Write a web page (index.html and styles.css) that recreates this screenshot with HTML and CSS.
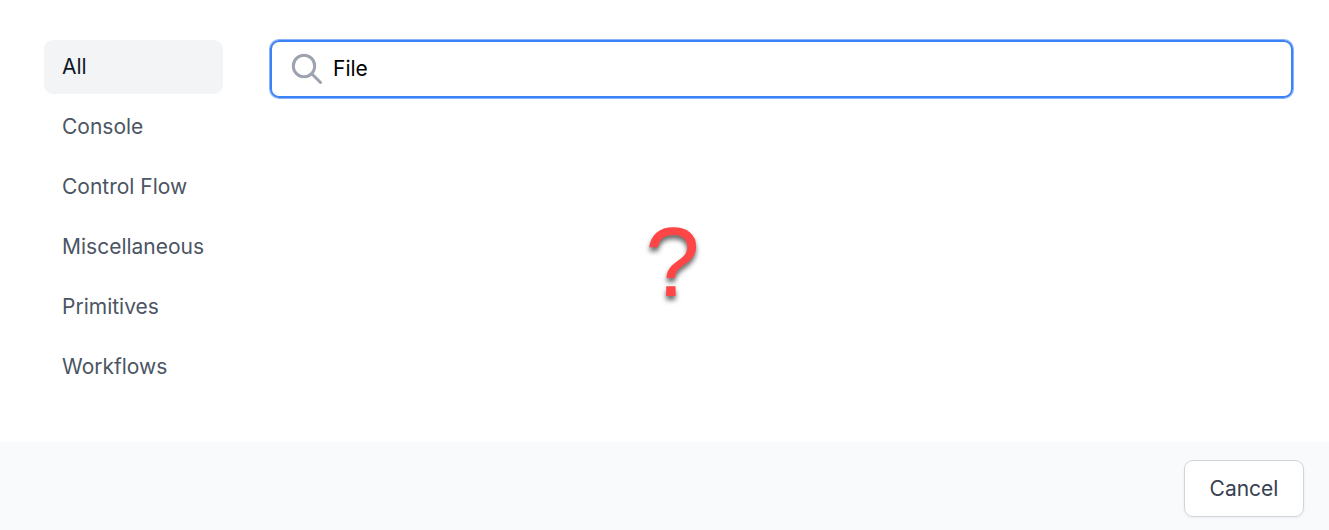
FILE: index.html
```html
<!DOCTYPE html>
<html lang="en">
<head>
<meta charset="utf-8">
<meta name="viewport" content="width=device-width, initial-scale=1">
<title>Add activity</title>
<link rel="stylesheet" href="styles.css">
</head>
<body>
<div class="dialog">
  <main class="content">
    <nav class="categories">
      <a class="category active" href="#all" aria-current="page">All</a>
      <a class="category" href="#console">Console</a>
      <a class="category" href="#control-flow">Control Flow</a>
      <a class="category" href="#miscellaneous">Miscellaneous</a>
      <a class="category" href="#primitives">Primitives</a>
      <a class="category" href="#workflows">Workflows</a>
    </nav>
    <section class="results">
      <label class="search">
        <svg class="search-icon" viewBox="0 0 32 32" fill="none" stroke="currentColor" stroke-width="3" stroke-linecap="round" aria-hidden="true">
          <circle cx="13" cy="13" r="10.7"/>
          <path d="M21 21l8.500 8.500"/>
        </svg>
        <input class="search-input" type="text" value="File" aria-label="Search">
      </label>
      <div class="empty"><span class="question">?</span></div>
    </section>
  </main>
  <footer class="footer">
    <button class="cancel" type="button">Cancel</button>
  </footer>
</div>
</body>
</html>
```
FILE: styles.css
```css
* {
  box-sizing: border-box;
}

body {
  margin: 0;
  background: #fff;
  color: #000;
  font-family: Inter, sans-serif;
  font-size: 21px;
  line-height: 30px;
}

.dialog {
  display: flex;
  flex-direction: column;
  min-height: 100vh;
}

.content {
  display: flex;
  flex: 1;
  gap: 47px;
  padding: 40px 36px 45px 44px;
}

.categories {
  display: flex;
  flex-direction: column;
  flex-basis: 179px;
  gap: 6px;
}

.category {
  padding: 12px 18px;
  border-radius: 9px;
  color: #4b5563;
  text-decoration: none;
}

.category.active {
  background: #f3f4f6;
  color: #111827;
}

.results {
  display: flex;
  flex: 1;
  flex-direction: column;
}

.search {
  display: flex;
  align-items: center;
  gap: 10px;
  padding: 11px 19px;
  border: 2px solid #3b82f6;
  border-radius: 9px;
  box-shadow: 0 0 0 1px rgba(59, 130, 246, 0.6);
}

.search-icon {
  width: 32px;
  height: 32px;
  color: #9ca3af;
}

.search-input {
  flex: 1;
  min-width: 0;
  padding: 0;
  border: 0;
  outline: 0;
  background: transparent;
  color: #000;
  font: inherit;
}

.empty {
  display: flex;
  flex: 1;
  align-items: center;
  justify-content: center;
  padding: 28px 218px 0 0;
}

.question {
  color: #ff4646;
  font-family: "Liberation Sans", Arial, sans-serif;
  font-size: 98px;
  line-height: 100px;
  text-shadow: 0 4px 5px rgba(0, 0, 0, 0.6);
}

.footer {
  display: flex;
  justify-content: flex-end;
  padding: 18px 25px 13px;
  background: #f9fafb;
}

.cancel {
  min-width: 120px;
  padding: 13px 24px 12px;
  border: 1px solid #d1d5db;
  border-radius: 9px;
  background: #fff;
  box-shadow: 0 1px 3px rgba(0, 0, 0, 0.06);
  color: #374151;
  font: inherit;
}
```
